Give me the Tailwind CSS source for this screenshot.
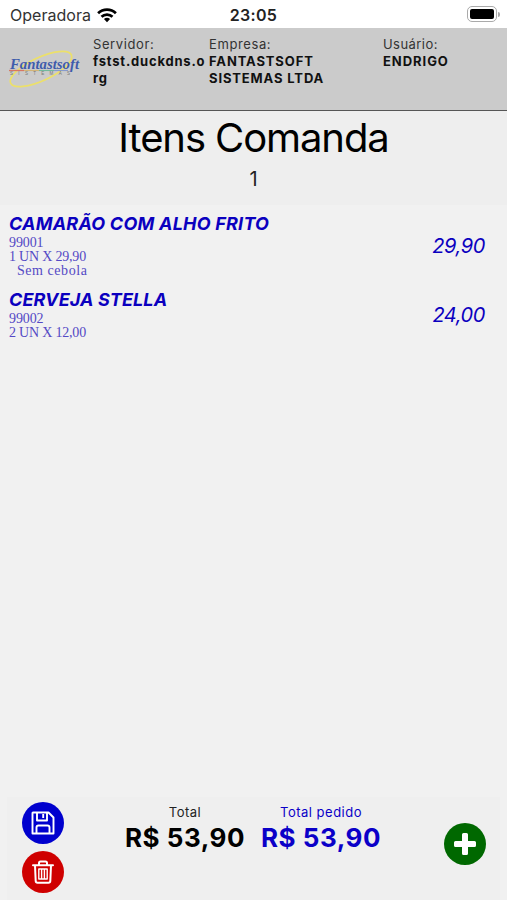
<!DOCTYPE html>
<html lang="pt-BR">
<head>
<meta charset="utf-8">
<title>Itens Comanda</title>
<script src="https://cdn.jsdelivr.net/npm/@tailwindcss/browser@4"></script>
</head>
<body class="bg-[#f1f1f1] text-black font-['Inter',sans-serif]">
<div class="flex h-[900px] w-[507px] flex-col overflow-hidden">
  <div class="grid h-7 shrink-0 grid-cols-3 items-center bg-white px-[10px] pt-[2px]">
    <div class="flex items-center gap-[6px] text-[16px] leading-5 tracking-[0.03px] text-[#333]">
      <span>Operadora</span>
      <svg class="h-[15px] w-[20px]" viewBox="0 0 20 15" fill="none" stroke="#000" stroke-width="2.7"><path d="M1.1 5.3C6.1.4 13.9.4 18.9 5.3M4.5 8.8C7.6 5.8 12.4 5.8 15.5 8.8"/><path d="M6.9 11.1Q10 8.5 13.1 11.1L10 14.3Z" fill="#000" stroke="none"/></svg>
    </div>
    <div class="text-center text-[16px] font-semibold leading-5 tracking-[0.3px] text-[#222]">23:05</div>
    <div class="-mr-[3px] flex items-center justify-end gap-px pb-[2px]">
      <div class="h-[16px] w-[30px] rounded-[5px] border border-[#aaa] p-[2px]"><div class="h-full rounded-[2px] bg-black"></div></div>
      <div class="h-[5px] w-[2px] rounded-r-full bg-[#aaa]"></div>
    </div>
  </div>
  <header class="flex h-[83px] shrink-0 border-b border-[#555] bg-[#cbcbcb] pt-[8px] text-[13px] leading-[17px] tracking-[0.6px] text-[#111]">
    <div class="w-[93px] shrink-0">
      <svg class="mt-[12px] h-[44px] w-[84px]" viewBox="0 0 84 44">
        <ellipse cx="41" cy="21" rx="33.5" ry="11.5" fill="none" stroke="#ece06a" stroke-width="1.7" transform="rotate(-25 41 21)"/>
        <text x="10" y="20.5" font-family="Liberation Serif, serif" font-weight="bold" font-style="italic" font-size="15" textLength="69" lengthAdjust="spacingAndGlyphs" fill="#3f5cab" letter-spacing="0">Fantastsoft</text>
        <path d="M9 22.5h15" stroke="#d77763" stroke-width="1.3"/><path d="M24 22.5h15" stroke="#d2b376" stroke-width="1.1"/><path d="M39 22.5h15" stroke="#71b99c" stroke-width="1.1"/><path d="M54 22.5h14" stroke="#879bcc" stroke-width="1.1"/>
        <text x="10" y="27" font-family="Liberation Sans, sans-serif" font-size="4.5" textLength="60" letter-spacing="0" fill="#777">SISTEMAS</text>
      </svg>
    </div>
    <div class="w-[116px] shrink-0"><div class="text-[#333]">Servidor:</div><div class="whitespace-nowrap font-bold tracking-[0.8px]">fstst.duckdns.o<br>rg</div></div>
    <div class="w-[174px] shrink-0"><div class="text-[#333]">Empresa:</div><div class="font-bold tracking-[0.87px]">FANTASTSOFT<br>SISTEMAS LTDA</div></div>
    <div><div class="tracking-[0.45px] text-[#333]">Usuário:</div><div class="font-bold tracking-[0.95px]">ENDRIGO</div></div>
  </header>
  <section class="h-[94px] shrink-0 bg-[#eee] text-center">
    <h1 class="pt-[2px] text-[40px] leading-[50px] tracking-[-1.1px]">Itens Comanda</h1>
    <div class="pt-[3px] text-[20px] leading-[26px] text-[#222]">1</div>
  </section>
  <main class="flex-1 pl-[9px] pr-[22px] pt-[8px] text-[#0b00bf]">
    <article class="flex h-[76px] justify-between">
      <div>
        <h2 class="text-[18px] font-bold italic leading-[22px] tracking-[0.22px]">CAMARÃO COM ALHO FRITO</h2>
        <div class="whitespace-pre pt-px font-['Liberation_Serif',serif] text-[14px] leading-[14.2px] text-[#5449c5]"><div class="tracking-[-0.1px]">99001</div><div class="tracking-[-0.2px]">1 UN X 29,90</div><div class="pl-[8px] tracking-[0.55px]">Sem cebola</div></div>
      </div>
      <div class="pt-[21px] text-[20px] italic leading-6 tracking-[-0.4px]">29,90</div>
    </article>
    <article class="flex h-[62px] justify-between">
      <div>
        <h2 class="text-[18px] font-bold italic leading-[22px] tracking-[0.1px]">CERVEJA STELLA</h2>
        <div class="whitespace-pre pt-px font-['Liberation_Serif',serif] text-[14px] leading-[14.2px] text-[#5449c5]"><div class="tracking-[-0.1px]">99002</div><div class="tracking-[-0.2px]">2 UN X 12,00</div></div>
      </div>
      <div class="pt-[14px] text-[20px] italic leading-6 tracking-[-0.4px]">24,00</div>
    </article>
  </main>
  <footer class="mx-[7px] flex h-[103px] shrink-0 bg-[#efefef]">
    <div class="flex w-[112px] shrink-0 flex-col gap-[7px] pl-[15px] pt-[5px]">
      <button class="flex size-[42px] items-center justify-center rounded-full bg-[#0000ce]" aria-label="Salvar">
        <svg class="size-[24px]" viewBox="0 0 24 24" fill="none" stroke="#fff" stroke-width="1.9" stroke-linejoin="round"><path d="M2 1.5H17.5L22.5 6.5V22.5H1.5V2Z"/><path d="M6 1.5V9.5H16V1.5M12.2 3V7M5.5 22.5V16.5Q5.5 14.5 7.5 14.5H16.5Q18.5 14.5 18.5 16.5V22.5"/></svg>
      </button>
      <button class="flex size-[42px] items-center justify-center rounded-full bg-[#cf0000]" aria-label="Excluir">
        <svg class="size-[24px]" viewBox="0 0 24 24" fill="none" stroke="#fff" stroke-width="2" stroke-linecap="round" stroke-linejoin="round"><path d="M2 5.2H22M8 5V3Q8 1.5 9.5 1.5H14.5Q16 1.5 16 3V5M4 5.5L4.7 21Q4.8 22.7 6.5 22.7H17.5Q19.2 22.7 19.3 21L20 5.5"/><path d="M7.8 9V19H16.2V9ZM10.6 9V19M13.4 9V19" stroke-width="1.4"/></svg>
      </button>
    </div>
    <div class="flex flex-1 gap-[16px] pl-[6px] pt-[7px] text-center">
      <div class="w-[120px]"><div class="text-[13px] leading-[17px] tracking-[0.5px] text-[#222]">Total</div><div class="whitespace-nowrap text-[26px] font-bold leading-[34px] tracking-[0.5px]">R$ 53,90</div></div>
      <div class="w-[120px] text-[#0b00c8]"><div class="text-[13px] leading-[17px] tracking-[0.5px]">Total pedido</div><div class="whitespace-nowrap text-[26px] font-bold leading-[34px] tracking-[0.5px]">R$ 53,90</div></div>
    </div>
    <button class="mr-[14px] mt-[26px] flex size-[42px] items-center justify-center rounded-full bg-[#006800]" aria-label="Adicionar">
      <svg class="size-[22px]" viewBox="0 0 22 22"><path d="M8 1.5Q8 0 9.5 0H12.5Q14 0 14 1.5V8H20.5Q22 8 22 9.5V12.5Q22 14 20.5 14H14V20.5Q14 22 12.5 22H9.5Q8 22 8 20.5V14H1.5Q0 14 0 12.5V9.5Q0 8 1.5 8H8Z" fill="#fff"/></svg>
    </button>
  </footer>
</div>
</body>
</html>
